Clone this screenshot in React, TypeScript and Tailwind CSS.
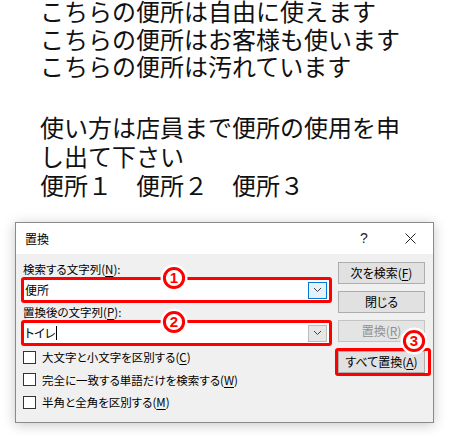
import React from "react";

const JP = "font-['Noto_Sans_CJK_JP','Noto_Sans',sans-serif]";

function Circled({ n, className }: { n: string; className: string }) {
  return (
    <svg width="30" height="30" viewBox="0 0 30 30" className={className}>
      <circle cx="15" cy="15" r="13.5" fill="#ffffff" />
      <circle cx="15" cy="15" r="9.6" fill="#ffffff" stroke="#ff0000" strokeWidth="3" />
      <text
        x="15"
        y="20.3"
        textAnchor="middle"
        fontSize="15"
        fontWeight="700"
        fill="#ff0000"
        fontFamily="'Liberation Sans', Arial, sans-serif"
      >
        {n}
      </text>
    </svg>
  );
}

function Chevron() {
  return (
    <svg width="9" height="6" viewBox="0 0 9 6">
      <path d="M1 1 L4.5 4.5 L8 1" fill="none" stroke="#404040" strokeWidth="1" />
    </svg>
  );
}

function U({ c }: { c: string }) {
  return <span className="underline underline-offset-2">{c}</span>;
}

function Combo({ children, focused }: { children: React.ReactNode; focused?: boolean }) {
  return (
    <div className="w-[311px] h-[26px] border-[3px] border-[#ff0000] rounded-[3px] bg-white flex items-center">
      <div className="flex-1 flex items-center pl-[1px] text-[12px] leading-[16px] text-black">{children}</div>
      <div
        className={
          "w-[19px] h-[17px] mr-[2px] flex items-center justify-center border " +
          (focused ? "bg-[#e5f1fb] border-[#0078d7]" : "bg-[#e6e6e6] border-[#bcbcbc]")
        }
      >
        <Chevron />
      </div>
    </div>
  );
}

function Btn({ children, disabled }: { children: React.ReactNode; disabled?: boolean }) {
  return (
    <div
      className={
        "w-[87px] h-[22px] border flex items-center justify-center text-[12px] leading-[16px] " +
        (disabled
          ? "bg-[#e4e4e4] border-[#c4c4c4] text-[#8f8f8f]"
          : "bg-[#e1e1e1] border-[#adadad] text-black")
      }
    >
      {children}
    </div>
  );
}

function Check({ children }: { children: React.ReactNode }) {
  return (
    <div className="h-[22.5px] flex items-center pl-[2px]">
      <div className="w-[13px] h-[13px] border border-[#333333] bg-white shrink-0" />
      <div className="ml-[6px] text-[11.5px] leading-[16px] text-black whitespace-nowrap">{children}</div>
    </div>
  );
}

export default function App() {
  return (
    <div className={"w-[451px] h-[435px] bg-white overflow-hidden " + JP}>
      <div className="pl-[40px] text-[24px] text-[#111111] whitespace-nowrap">
        <div className="-mt-[3px] leading-[27.5px]">
          <div>こちらの便所は自由に使えます</div>
          <div>こちらの便所はお客様も使います</div>
          <div>こちらの便所は汚れています</div>
        </div>
        <div className="mt-[32.5px] leading-[29px]">
          <div>使い方は店員まで便所の使用を申</div>
          <div>し出て下さい</div>
          <div>便所１　便所２　便所３</div>
        </div>
      </div>

      <div className="relative ml-[15px] mt-[23px] w-[419px] h-[201px] border border-[#8a8a8a] bg-[#f0f0f0] shadow-[0_2px_12px_rgba(0,0,0,0.22)] [font-feature-settings:'palt']">
        <div className="h-[31px] bg-white flex items-center">
          <div className="pl-[9px] text-[12px] leading-[16px] text-black flex-1">置換</div>
          <div className="w-[46px] h-full flex items-center justify-center text-[14px] text-[#222222] font-['Liberation_Sans',sans-serif]">
            ?
          </div>
          <div className="w-[46px] h-full flex items-center justify-center">
            <svg width="11" height="11" viewBox="0 0 11 11">
              <path d="M0.5 0.5 L10.5 10.5 M10.5 0.5 L0.5 10.5" stroke="#222222" strokeWidth="1" />
            </svg>
          </div>
        </div>

        <div className="flex pl-[5px] pr-[8px]">
          <div className="w-[311px] pt-[7px]">
            <div className="pl-[2px] h-[16px] text-[11.5px] leading-[16px] text-black">
              検索する文字列(<U c="N" />):
            </div>
            <Combo focused>便所</Combo>
            <div className="mt-[1px] pl-[2px] h-[16px] text-[11.5px] leading-[16px] text-black">
              置換後の文字列(<U c="P" />):
            </div>
            <Combo>
              <span>トイレ</span>
              <span className="inline-block w-[1px] h-[14px] bg-black ml-[1px]" />
            </Combo>
            <Check>
              大文字と小文字を区別する(<U c="C" />)
            </Check>
            <Check>
              完全に一致する単語だけを検索する(<U c="W" />)
            </Check>
            <Check>
              半角と全角を区別する(<U c="M" />)
            </Check>
          </div>

          <div className="ml-[6px] pt-[8px] flex flex-col">
            <Btn>
              次を検索(<U c="F" />)
            </Btn>
            <div className="mt-[7px]">
              <Btn>閉じる</Btn>
            </div>
            <div className="mt-[7px]">
              <Btn disabled>
                置換(<U c="R" />)
              </Btn>
            </div>
            <div className="mt-[6px] -ml-[3px] w-[96px] border-[3px] border-[#ff0000] rounded-[3px]">
              <Btn>
                すべて置換(<U c="A" />)
              </Btn>
            </div>
          </div>
        </div>

        <Circled n="1" className="absolute left-[143px] top-[40px]" />
        <Circled n="2" className="absolute left-[143px] top-[84px]" />
        <Circled n="3" className="absolute left-[383px] top-[103px]" />
      </div>
    </div>
  );
}
